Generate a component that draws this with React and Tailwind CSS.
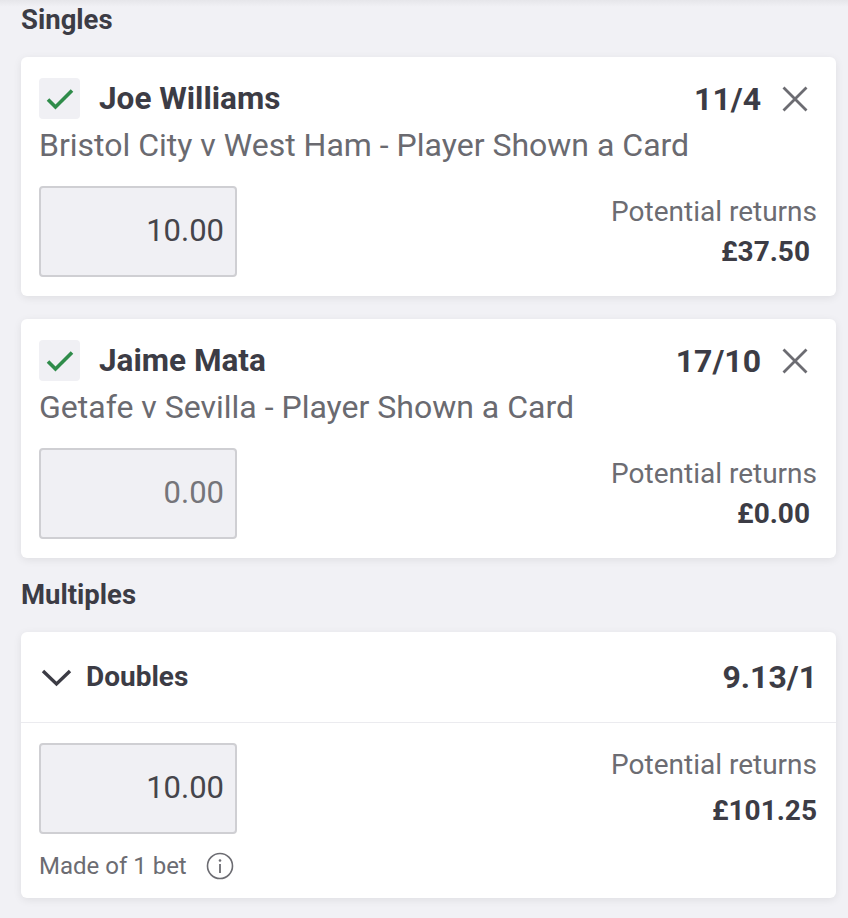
import React from "react";

const font = { fontFamily: "Roboto, 'Noto Sans', sans-serif" };

function Check() {
  return (
    <div className="w-[41px] h-[41px] rounded-[4px] bg-[#f0f0f4] flex items-center justify-center shrink-0">
      <svg width="28" height="22" viewBox="0 0 28 22" fill="none">
        <path d="M2 11.5l7.5 7.5L26 2.5" stroke="#2f8c4a" strokeWidth="3.6" />
      </svg>
    </div>
  );
}

function Close() {
  return (
    <svg width="26" height="26" viewBox="0 0 26 26" fill="none" className="mr-[9px]">
      <path d="M1.5 1.5L24.5 24.5M24.5 1.5L1.5 24.5" stroke="#6c6c72" strokeWidth="2.8" />
    </svg>
  );
}

function StakeBox({ value, muted }) {
  return (
    <div
      className={`w-[198px] h-[91px] rounded-[4px] border-2 border-[#cfcfd3] bg-[#f0f0f4] flex items-center justify-end pr-[11px] text-[31px] ${
        muted ? "text-[#75757a]" : "text-[#45454b]"
      }`}
    >
      {value}
    </div>
  );
}

function Single({ name, odds, desc, stake, returns, muted }) {
  return (
    <div className="bg-white rounded-[6px] shadow-[0_2px_8px_rgba(0,0,0,0.08)] pt-[21px] pl-[18px] pr-[19px] pb-[19px]">
      <div className="flex items-center h-[41px]">
        <Check />
        <div className="ml-[19px] text-[31.5px] font-bold text-[#3c3c45] flex-1">{name}</div>
        <div className="text-[32px] font-bold text-[#3c3c45] mr-[21px]">{odds}</div>
        <Close />
      </div>
      <div className="mt-[8px] leading-[36px] text-[32px] text-[#6a6a70]">{desc}</div>
      <div className="mt-[23px] flex items-center justify-between">
        <StakeBox value={stake} muted={muted} />
        <div className="flex flex-col items-end">
          <div className="leading-[40px] text-[28px] text-[#6c6c72]">Potential returns</div>
          <div className="leading-[40px] text-[28px] font-bold text-[#3c3c45] pr-[7px]">{returns}</div>
        </div>
      </div>
    </div>
  );
}

export default function App() {
  return (
    <div
      style={font}
      className="min-h-[918px] bg-[linear-gradient(to_bottom,#e6e6ea_0px,#f1f1f5_7px)] pl-[21px] pr-[12px]"
    >
      <div className="leading-[40px] text-[27.5px] font-bold text-[#3c3c45] mb-[17px]">Singles</div>
      <Single
        name="Joe Williams"
        odds="11/4"
        desc="Bristol City v West Ham - Player Shown a Card"
        stake="10.00"
        returns="£37.50"
      />
      <div className="h-[23px]" />
      <Single
        name="Jaime Mata"
        odds="17/10"
        desc="Getafe v Sevilla - Player Shown a Card"
        stake="0.00"
        returns="£0.00"
        muted
      />
      <div className="h-[74px] flex items-center text-[27.5px] font-bold text-[#3c3c45]">Multiples</div>
      <div className="bg-white rounded-[6px] shadow-[0_2px_8px_rgba(0,0,0,0.08)]">
        <div className="h-[91px] border-b border-[#ebebef] flex items-center pl-[20px] pr-[19px]">
          <svg width="31" height="20" viewBox="0 0 31 20" fill="none">
            <path d="M2 4l13.5 13L29 4" stroke="#3c3c45" strokeWidth="3.4" />
          </svg>
          <div className="ml-[14px] flex-1 text-[28px] font-bold text-[#3c3c45]">Doubles</div>
          <div className="text-[32px] font-bold text-[#3c3c45]">9.13/1</div>
        </div>
        <div className="pt-[19px] pl-[18px] pr-[19px] pb-[14px]">
          <div className="flex items-center justify-between">
            <StakeBox value="10.00" />
            <div className="flex flex-col items-end">
              <div className="leading-[46px] text-[28px] text-[#6c6c72]">Potential returns</div>
              <div className="leading-[46px] text-[28px] font-bold text-[#3c3c45]">£101.25</div>
            </div>
          </div>
          <div className="mt-[14px] h-[36px] flex items-center text-[24px] text-[#6c6c72]">
            <span>Made of 1 bet</span>
            <svg width="28" height="28" viewBox="0 0 28 28" fill="none" className="ml-[19px]">
              <circle cx="14" cy="14" r="12.5" stroke="#6c6c72" strokeWidth="1.6" />
              <circle cx="14" cy="8.5" r="1.3" fill="#6c6c72" />
              <path d="M14 12v9" stroke="#6c6c72" strokeWidth="1.8" />
            </svg>
          </div>
        </div>
      </div>
    </div>
  );
}
